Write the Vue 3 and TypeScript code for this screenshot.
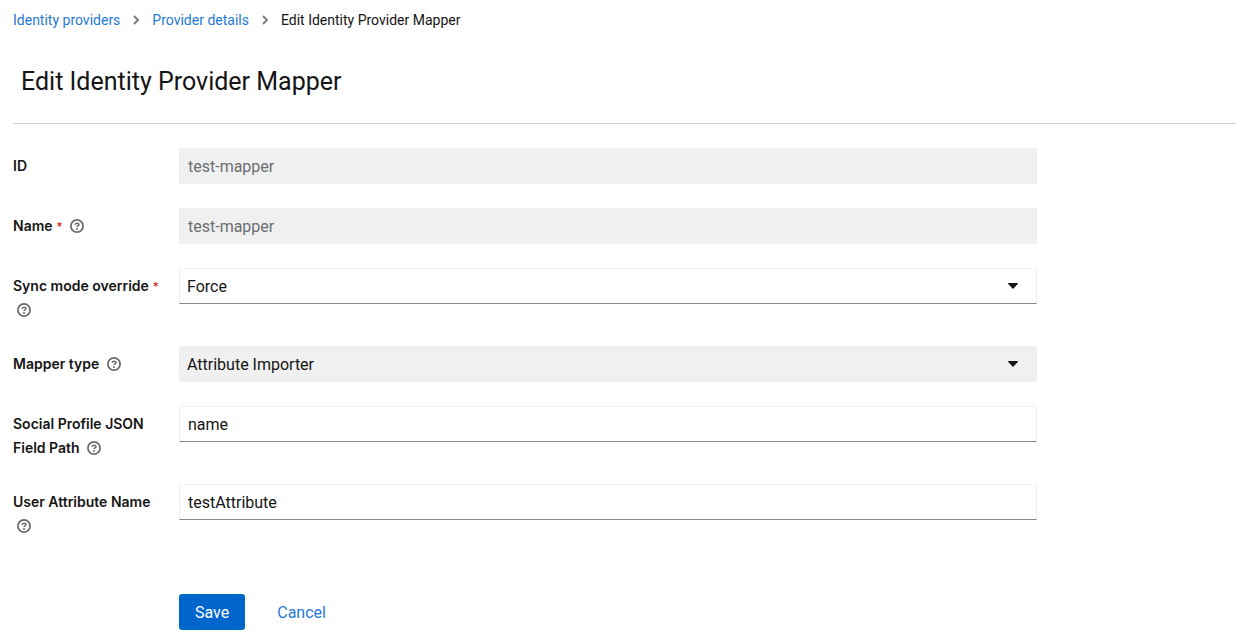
<script setup lang="ts">
import { ref } from 'vue'

interface Field {
  id: string
  label: string
  kind: 'text' | 'select'
  required?: boolean
  disabled?: boolean
  help?: boolean
  options?: string[]
}

const fields: Field[] = [
  { id: 'mapper-id', label: 'ID', kind: 'text', disabled: true },
  { id: 'name', label: 'Name', kind: 'text', disabled: true, required: true, help: true },
  { id: 'sync-mode', label: 'Sync mode override', kind: 'select', required: true, help: true, options: ['Force'] },
  { id: 'mapper-type', label: 'Mapper type', kind: 'select', disabled: true, help: true, options: ['Attribute Importer'] },
  { id: 'json-field', label: 'Social Profile JSON Field Path', kind: 'text', help: true },
  { id: 'user-attribute', label: 'User Attribute Name', kind: 'text', help: true },
]

const values = ref<Record<string, string>>({
  'mapper-id': 'test-mapper',
  name: 'test-mapper',
  'sync-mode': 'Force',
  'mapper-type': 'Attribute Importer',
  'json-field': 'name',
  'user-attribute': 'testAttribute',
})

const crumbs = ['Identity providers', 'Provider details']
</script>

<template>
  <main class="page">
    <nav class="breadcrumb" aria-label="Breadcrumb">
      <template v-for="crumb in crumbs" :key="crumb">
        <a href="#">{{ crumb }}</a>
        <svg class="chevron" viewBox="0 0 6 10" aria-hidden="true">
          <path d="M1 1l4 4-4 4" fill="none" stroke="currentColor" stroke-width="2" />
        </svg>
      </template>
      <span aria-current="page">Edit Identity Provider Mapper</span>
    </nav>
    <h1 class="title">Edit Identity Provider Mapper</h1>
    <form class="form" @submit.prevent>
      <div v-for="field in fields" :key="field.id" class="row">
        <div class="label">
          <label :for="field.id">{{ field.label }}</label>
          <span v-if="field.required" class="required" aria-hidden="true">*</span>
          {{ ' ' }}
          <button v-if="field.help" type="button" class="help" :aria-label="`Help for ${field.label}`">
            <svg viewBox="0 0 14 14" aria-hidden="true">
              <circle cx="7" cy="7" r="6.1" fill="none" stroke="currentColor" stroke-width="1.8" />
              <path d="M5 5.7C5.3 4.7 6 4.2 7 4.2c1.1 0 1.9.6 1.9 1.5C8.9 6.8 7 6.9 7 8.1" fill="none" stroke="currentColor" stroke-width="1.6" />
              <circle cx="7" cy="9.9" r="1" fill="currentColor" />
            </svg>
          </button>
        </div>
        <input
          v-if="field.kind === 'text'"
          :id="field.id"
          v-model="values[field.id]"
          class="control"
          type="text"
          :disabled="field.disabled"
        />
        <div v-else class="select">
          <select :id="field.id" v-model="values[field.id]" class="control" :disabled="field.disabled">
            <option v-for="option in field.options" :key="option">{{ option }}</option>
          </select>
          <svg class="caret" viewBox="0 0 10 6" aria-hidden="true">
            <path d="M.7 0h8.6c.6 0 .9.7.5 1.1L5.5 5.4a.7.7 0 0 1-1 0L.2 1.1C-.2.7.1 0 .7 0z" fill="currentColor" />
          </svg>
        </div>
      </div>
      <div class="actions">
        <button type="submit" class="button primary">Save</button>
        <button type="button" class="button link">Cancel</button>
      </div>
    </form>
  </main>
</template>

<style>
body {
  margin: 0;
  background: #fff;
}
</style>

<style scoped>
.page {
  padding: 8px 0 5px 13px;
  color: #151515;
  font-family: Roboto, "Liberation Sans", sans-serif;
  font-size: 16px;
  line-height: 24px;
}
.breadcrumb {
  display: flex;
  align-items: center;
  gap: 13px;
  font-size: 14px;
}
.breadcrumb a {
  color: #1f7ad6;
  text-decoration: none;
}
.chevron {
  width: 6px;
  height: 10px;
  color: #7d8083;
}
.title {
  margin: 0;
  padding: 33px 8px 25px;
  border-bottom: 1px solid #d2d2d2;
  font-size: 25px;
  font-weight: 400;
  line-height: 33px;
}
.form {
  display: grid;
  gap: 24px;
  max-width: 1024px;
  padding-top: 24px;
}
.row {
  display: grid;
  grid-template-columns: 150px 1fr;
  column-gap: 16px;
  align-items: start;
}
.label {
  padding-top: 6px;
  font-family: Inter, Roboto, sans-serif;
  font-size: 14px;
  font-weight: 600;
}
.required {
  margin-left: 4px;
  color: #c9190b;
  font-size: 12px;
  font-weight: 400;
  line-height: 12px;
}
.help {
  margin: 0 4px;
  padding: 0;
  border: 0;
  background: none;
  color: #6a6e73;
  line-height: 14px;
  vertical-align: -2px;
}
.help svg {
  display: block;
  width: 14px;
  height: 14px;
}
.control {
  box-sizing: border-box;
  width: 100%;
  height: 36px;
  margin: 0;
  padding: 0 8px;
  border: 1px solid #f0f0f0;
  border-bottom-color: #8a8d90;
  border-radius: 0;
  background: #fff;
  color: #151515;
  font: inherit;
  appearance: none;
}
.control:disabled {
  border-color: #f0f0f0;
  background: #f0f0f0;
  color: #6a6e73;
  opacity: 1;
}
.select {
  display: grid;
  align-items: center;
}
.select > * {
  grid-area: 1 / 1;
}
.select .control {
  padding: 2px 7px 0;
}
.select .control:disabled {
  color: #151515;
}
.caret {
  justify-self: end;
  width: 10px;
  height: 6px;
  margin-right: 19px;
  pointer-events: none;
}
.actions {
  display: flex;
  gap: 16px;
  padding: 32px 0 0 166px;
}
.button {
  height: 36px;
  padding: 2px 16px 0;
  border: 0;
  border-radius: 3px;
  font: inherit;
}
.primary {
  background: #06c;
  color: #fff;
}
.link {
  background: none;
  color: #1f7ad6;
}
</style>
